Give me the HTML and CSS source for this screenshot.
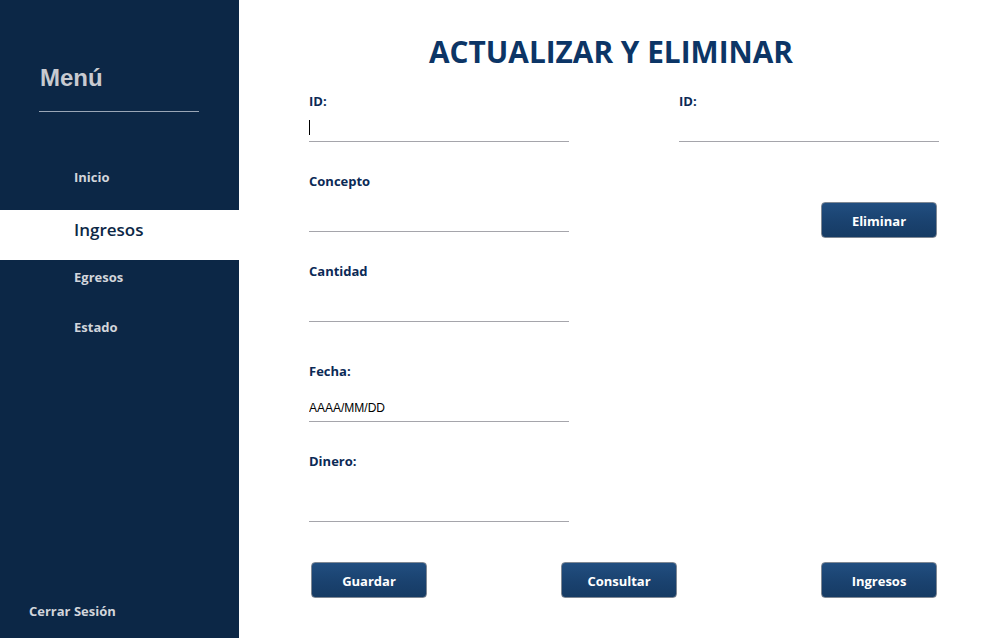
FILE: index.html
```html
<!DOCTYPE html>
<html lang="es">
<head>
<meta charset="utf-8">
<title>Actualizar y Eliminar</title>
<link rel="stylesheet" href="styles.css">
</head>
<body>
<div class="app">
  <aside class="sidebar">
    <div class="menu-title">Menú</div>
    <div class="menu-rule"></div>
    <nav class="nav">
      <a class="nav-item">Inicio</a>
      <a class="nav-item active">Ingresos</a>
      <a class="nav-item">Egresos</a>
      <a class="nav-item">Estado</a>
    </nav>
    <a class="logout">Cerrar Sesión</a>
  </aside>
  <main class="main">
    <h1 class="title">ACTUALIZAR Y ELIMINAR</h1>
    <div class="form">
      <div class="col">
        <div class="field f-id">
          <label class="label">ID:</label>
          <div class="input-wrap caret"><input class="input" type="text"></div>
        </div>
        <div class="field f-concepto">
          <label class="label">Concepto</label>
          <div class="input-wrap"><input class="input" type="text"></div>
        </div>
        <div class="field f-cantidad">
          <label class="label">Cantidad</label>
          <div class="input-wrap"><input class="input" type="text"></div>
        </div>
        <div class="field f-fecha">
          <label class="label">Fecha:</label>
          <div class="input-wrap"><input class="input" type="text" placeholder="AAAA/MM/DD"></div>
        </div>
        <div class="field f-dinero">
          <label class="label">Dinero:</label>
          <div class="input-wrap"><input class="input" type="text"></div>
        </div>
      </div>
      <div class="col">
        <div class="field f-id">
          <label class="label">ID:</label>
          <div class="input-wrap"><input class="input" type="text"></div>
        </div>
        <div class="delete-row">
          <button class="btn">Eliminar</button>
        </div>
      </div>
    </div>
    <div class="actions">
      <button class="btn">Guardar</button>
      <button class="btn btn-consultar">Consultar</button>
      <button class="btn btn-ingresos">Ingresos</button>
    </div>
  </main>
</div>
</body>
</html>
```
FILE: styles.css
```css
* { box-sizing: border-box; }
html, body { margin: 0; padding: 0; }
body {
  width: 1008px;
  height: 638px;
  overflow: hidden;
  background: #ffffff;
  font-family: "Open Sans", "Noto Sans", sans-serif;
}
.app {
  display: flex;
  height: 638px;
}
.sidebar {
  width: 239px;
  flex: none;
  background: #0c2746;
  display: flex;
  flex-direction: column;
  padding-top: 63px;
}
.menu-title {
  font-family: "Liberation Sans", Arial, sans-serif;
  font-weight: bold;
  font-size: 24px;
  line-height: 30px;
  color: #c8cad0;
  padding-left: 40px;
}
.menu-rule {
  margin: 18px 0 0 39px;
  width: 160px;
  height: 1px;
  background: #9aa6b6;
}
.nav {
  display: flex;
  flex-direction: column;
  margin-top: 48px;
}
.nav-item {
  display: block;
  height: 34px;
  line-height: 34px;
  margin-top: 16px;
  padding-left: 74px;
  font-weight: 700;
  font-size: 13px;
  color: #d2d5db;
}
.nav-item:first-child { margin-top: 0; }
.nav-item.active {
  height: 50px;
  line-height: 40px;
  background: #ffffff;
  color: #0c2746;
  font-size: 17px;
  font-weight: 600;
}
.nav-item.active + .nav-item { margin-top: 0; }
.logout {
  margin-top: auto;
  margin-bottom: 18px;
  padding-left: 29px;
  font-weight: 700;
  font-size: 13px;
  line-height: 18px;
  color: #d2d5db;
}
.main {
  flex: 1;
  padding-left: 70px;
}
.title {
  margin: 33px 0 0 0;
  width: 604px;
  text-align: center;
  font-size: 29.8px;
  line-height: 38px;
  font-weight: 700;
  color: #0c3566;
}
.form {
  display: flex;
  gap: 110px;
  margin-top: 21px;
}
.col {
  width: 260px;
}
.label {
  display: block;
  font-weight: 700;
  font-size: 13px;
  line-height: 18px;
  color: #0b2a56;
}
.input-wrap {
  position: relative;
  border-bottom: 1px solid #a5a5ab;
  display: flex;
  align-items: flex-end;
}
.input {
  border: none;
  outline: none;
  background: transparent;
  width: 100%;
  padding: 0;
  font-family: "Liberation Sans", Arial, sans-serif;
  font-size: 12px;
  line-height: 14px;
  height: 14px;
  margin-bottom: 6px;
  color: #000;
}
.input::placeholder { color: #000; opacity: 1; }
.caret::before {
  content: "";
  position: absolute;
  left: 0;
  top: 10px;
  width: 1px;
  height: 15px;
  background: #000;
}
.f-id .input-wrap { height: 32px; }
.field + .field { margin-top: 30px; }
.f-concepto .input-wrap,
.f-cantidad .input-wrap,
.f-fecha .input-wrap { height: 42px; }
.col .f-fecha { margin-top: 40px; }
.f-dinero .input-wrap { height: 52px; }
.delete-row {
  display: flex;
  justify-content: flex-end;
  padding-right: 2px;
  margin-top: 60px;
}
.btn {
  width: 116px;
  height: 36px;
  border: 1px solid #7f8894;
  border-radius: 4px;
  background: linear-gradient(#214e80, #1a426f 55%, #163b64);
  color: #ffffff;
  font-family: "Open Sans", "Noto Sans", sans-serif;
  font-weight: 700;
  font-size: 13px;
  padding: 2px 0 0 0;
}
.actions {
  display: flex;
  margin-top: 40px;
  padding-left: 2px;
}
.btn-consultar { margin-left: 134px; }
.btn-ingresos { margin-left: 144px; }
```
